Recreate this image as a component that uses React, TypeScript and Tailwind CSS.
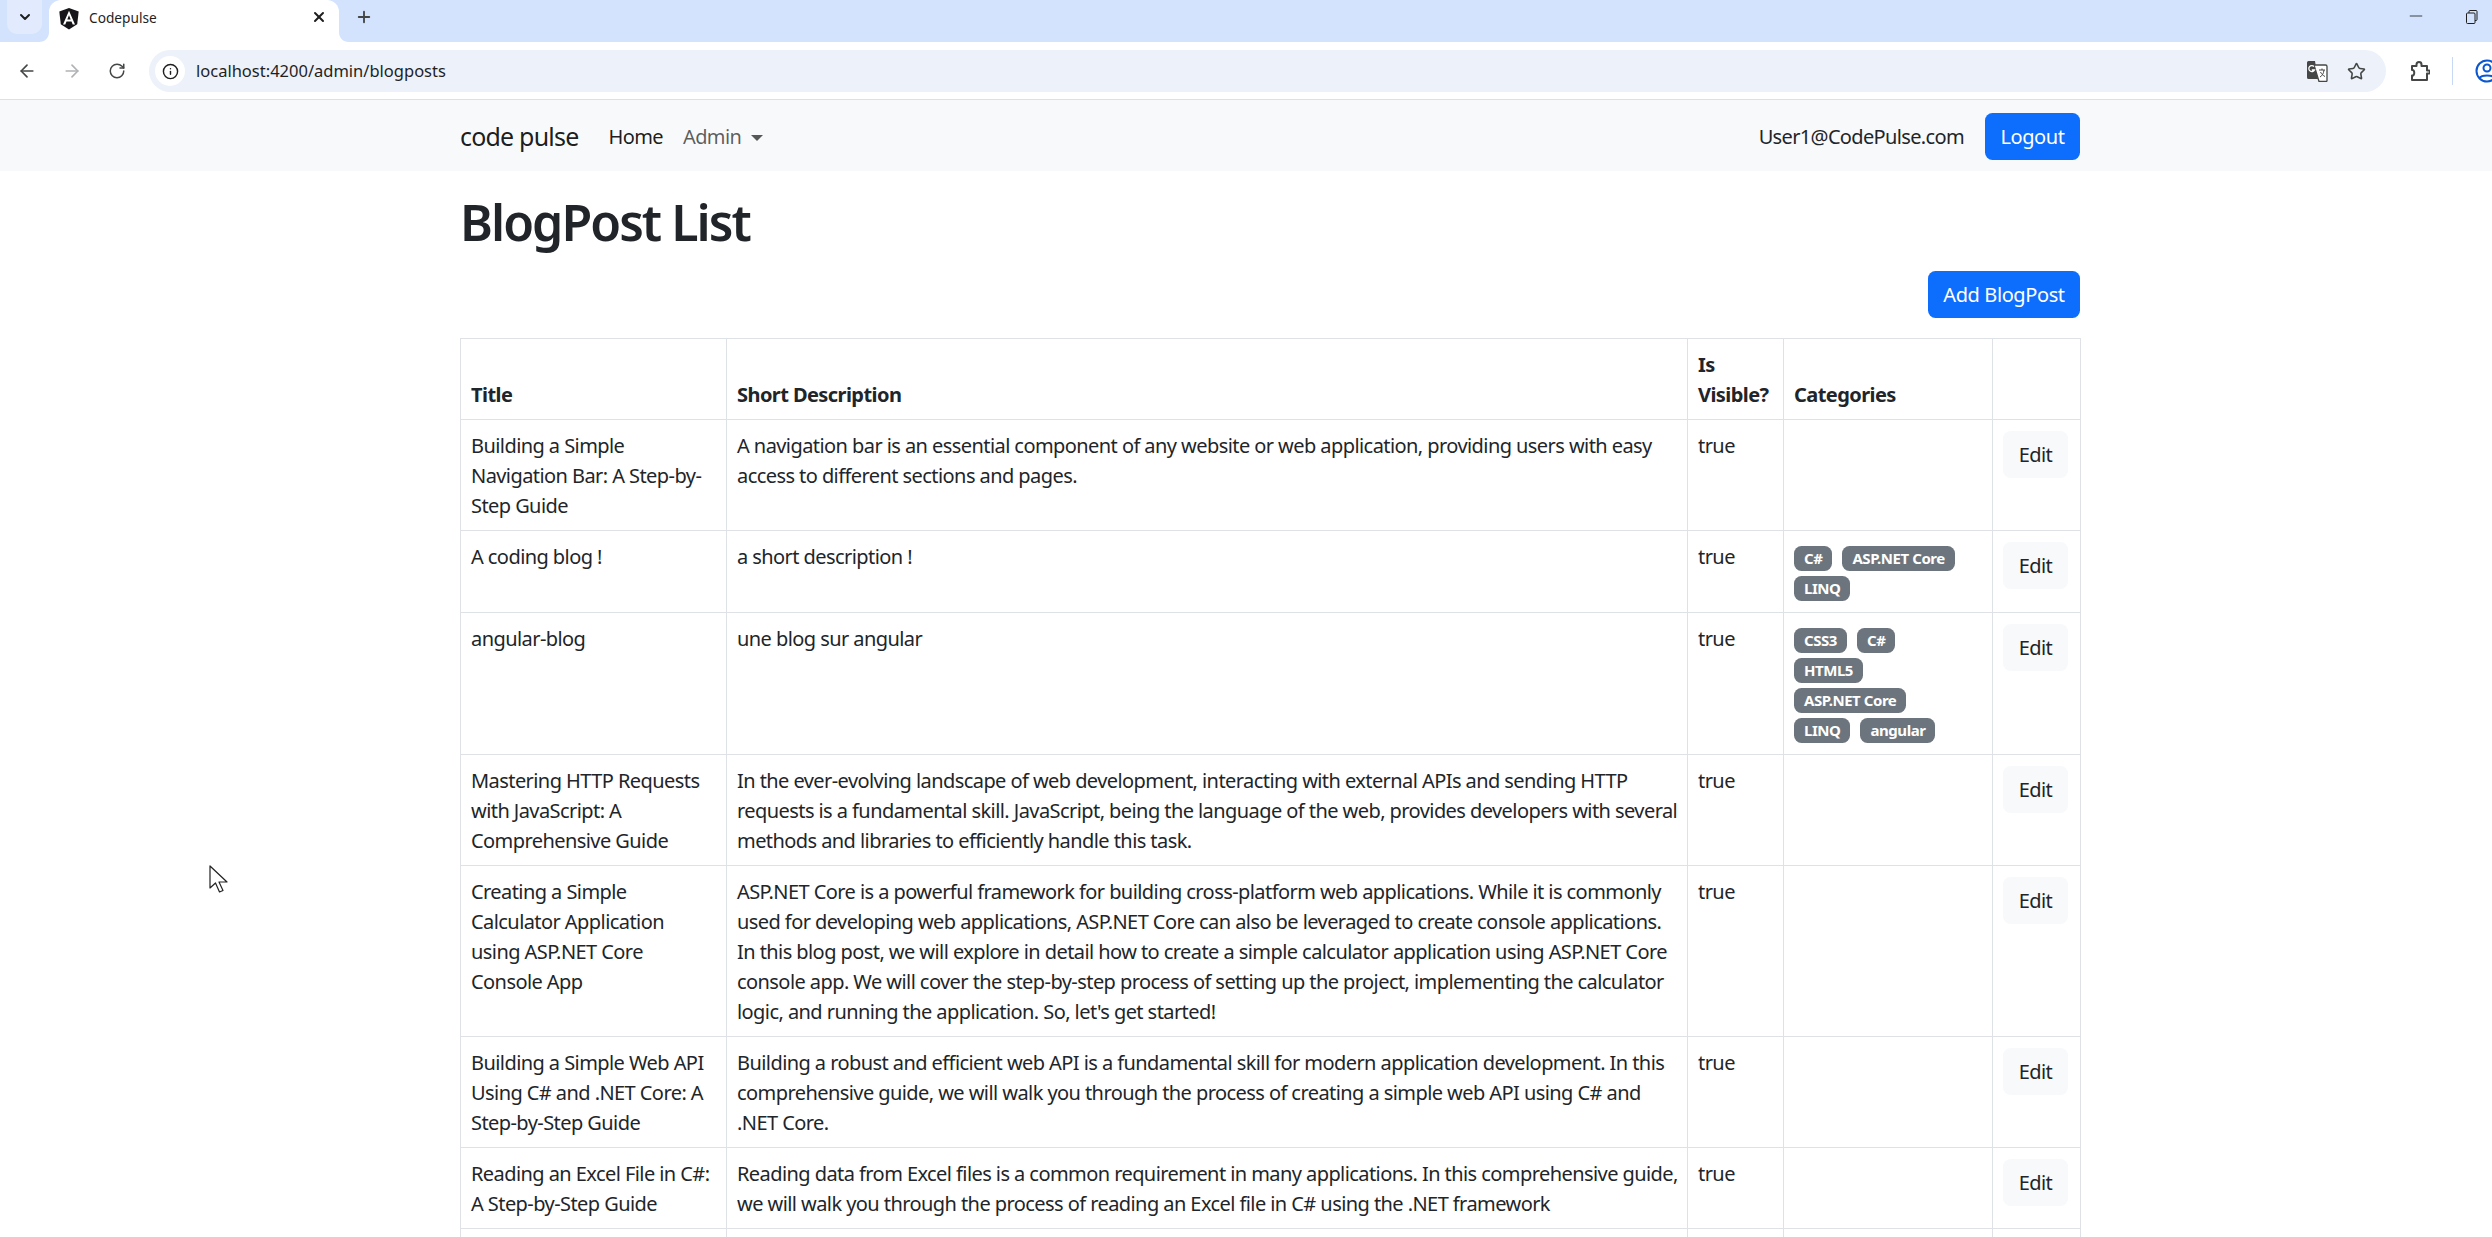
import { ArrowLeft, ArrowRight, RotateCw, Info, Star, ChevronDown, X, Plus, Minus } from 'lucide-react'

type Post = {
  title: string
  desc: string
  cats?: string[][]
}

const posts: Post[] = [
  {
    title: 'Building a Simple\nNavigation Bar: A Step-by-\nStep Guide',
    desc: 'A navigation bar is an essential component of any website or web application, providing users with easy\naccess to different sections and pages.',
  },
  {
    title: 'A coding blog !',
    desc: 'a short description !',
    cats: [['C#', 'ASP.NET Core'], ['LINQ']],
  },
  {
    title: 'angular-blog',
    desc: 'une blog sur angular',
    cats: [['CSS3', 'C#'], ['HTML5'], ['ASP.NET Core'], ['LINQ', 'angular']],
  },
  {
    title: 'Mastering HTTP Requests\nwith JavaScript: A\nComprehensive Guide',
    desc: 'In the ever-evolving landscape of web development, interacting with external APIs and sending HTTP\nrequests is a fundamental skill. JavaScript, being the language of the web, provides developers with several\nmethods and libraries to efficiently handle this task.',
  },
  {
    title: 'Creating a Simple\nCalculator Application\nusing ASP.NET Core\nConsole App',
    desc: "ASP.NET Core is a powerful framework for building cross-platform web applications. While it is commonly\nused for developing web applications, ASP.NET Core can also be leveraged to create console applications.\nIn this blog post, we will explore in detail how to create a simple calculator application using ASP.NET Core\nconsole app. We will cover the step-by-step process of setting up the project, implementing the calculator\nlogic, and running the application. So, let's get started!",
  },
  {
    title: 'Building a Simple Web API\nUsing C# and .NET Core: A\nStep-by-Step Guide',
    desc: 'Building a robust and efficient web API is a fundamental skill for modern application development. In this\ncomprehensive guide, we will walk you through the process of creating a simple web API using C# and\n.NET Core.',
  },
  {
    title: 'Reading an Excel File in C#:\nA Step-by-Step Guide',
    desc: 'Reading data from Excel files is a common requirement in many applications. In this comprehensive guide,\nwe will walk you through the process of reading an Excel file in C# using the .NET framework',
  },
]

function BrowserChrome() {
  return (
    <div className="font-['Noto_Sans',sans-serif]">
      {/* tab strip */}
      <div className="flex h-[42px] bg-[#d3e3fd]">
        <div className="ml-[7px] flex h-[34px] w-[35px] items-center justify-center rounded-b-[10px] bg-[#e1ebfd]">
          <ChevronDown size={16} strokeWidth={3} className="text-[#1f1f1f]" />
        </div>
        <div className="relative ml-[7px] flex h-[42px] w-[290px] items-center rounded-t-[12px] bg-white pb-[5px] pl-[10px]">
          <svg className="absolute bottom-0 left-[-10px]" width="10" height="10" viewBox="0 0 10 10">
            <path d="M10 0v10H0c6 0 10-4 10-10z" fill="#ffffff" />
          </svg>
          <svg className="absolute bottom-0 right-[-10px]" width="10" height="10" viewBox="0 0 10 10">
            <path d="M0 0v10h10C4 10 0 6 0 0z" fill="#ffffff" />
          </svg>
          <svg width="20" height="22" viewBox="0 0 20 22">
            <path d="M10 0 0.3 3.500l1.500 12.800L10 21.500l8.200-5.200 1.500-12.800z" fill="#16161a" />
            <path d="M10 2.800 4 16.400h2.300l1.200-3h5l1.200 3H16L10 2.800zm1.700 8.700H8.300L10 7.300l1.700 4.200z" fill="#ffffff" />
          </svg>
          <span className="ml-[10px] text-[13.7px] text-[#1f1f1f]">Codepulse</span>
          <X size={16} strokeWidth={3} className="absolute left-[262px] top-[9px] text-[#1f1f1f]" />
        </div>
        <Plus size={18} strokeWidth={2.5} className="ml-[16px] mt-[8px] text-[#444746]" />
        <div className="flex-1" />
        <Minus size={20} strokeWidth={1} className="mr-[40px] mt-[6px] text-[#1f1f1f]" />
        <svg className="mr-[14px] mt-[10px]" width="12" height="14" viewBox="0 0 12 14" fill="none" stroke="#1f1f1f" strokeWidth="1">
          <rect x="0.5" y="3" width="8.5" height="10.5" rx="1" />
          <path d="M3 3V1.500a1 1 0 0 1 1-1h6a1 1 0 0 1 1 1v8a1 1 0 0 1-1 1H9" />
        </svg>
      </div>

      {/* toolbar */}
      <div className="flex h-[58px] items-center border-b border-[#e0e0e0] bg-white pl-[4px] pt-[1px]">
        <div className="flex w-[45px] shrink-0 justify-center">
          <ArrowLeft size={20} strokeWidth={2} className="text-[#444746]" />
        </div>
        <div className="flex w-[45px] shrink-0 justify-center">
          <ArrowRight size={20} strokeWidth={2} className="text-[#b0b2b4]" />
        </div>
        <div className="flex w-[45px] shrink-0 justify-center">
          <RotateCw size={18} strokeWidth={2} className="text-[#444746]" />
        </div>
        <div className="ml-[10px] flex h-[42px] w-[2237px] shrink-0 items-center rounded-full bg-[#ecf1fa] pl-[6px] pr-[20px]">
          <div className="flex h-[30px] w-[30px] items-center justify-center rounded-full bg-white">
            <Info size={17} strokeWidth={2} className="text-[#1f1f1f]" />
          </div>
          <span className="ml-[11px] text-[16.5px] text-[#1f1f1f]">localhost:4200/admin/blogposts</span>
          <div className="flex-1" />
          <svg width="22" height="22" viewBox="0 0 22 22">
            <path d="M1 2.500A1.500 1.500 0 0 1 2.500 1H9l3 18H2.500A1.500 1.500 0 0 1 1 17.500z" fill="#444746" />
            <path d="M8 5h11.500A1.500 1.500 0 0 1 21 6.500v14a1 1 0 0 1-1 1h-7z" fill="#ffffff" stroke="#444746" strokeWidth="1.300" />
            <path d="M13 10h6M16 8.500V10M14 17c2.500-1.500 3.500-3.500 4-7M14.500 12c1 2 2.500 3.500 4.500 4.500" fill="none" stroke="#444746" strokeWidth="1" />
            <path d="M8 6.500a3 3 0 1 0 .5 3.500H5.800" fill="none" stroke="#ffffff" strokeWidth="1.300" />
          </svg>
          <Star size={19} strokeWidth={2} className="ml-[19px] text-[#444746]" />
        </div>
        <svg className="ml-[24px] shrink-0" width="20" height="22" viewBox="0 0 20 22" fill="none" stroke="#444746" strokeWidth="2">
          <path d="M2 6h4.500V4.500a2.500 2.500 0 0 1 5 0V6H17v4.500h1.500a1.500 1.500 0 0 1 0 3H17V20H2v-4.500c3 .8 3-6.500 0-5.500z" strokeLinejoin="round" />
        </svg>
        <div className="ml-[22px] h-[28px] w-[1px] shrink-0 bg-[#c7d9f5]" />
        <svg className="ml-[22px] shrink-0" width="24" height="24" viewBox="0 0 24 24" fill="none" stroke="#0b57d0" strokeWidth="2">
          <circle cx="12" cy="12" r="10.500" />
          <circle cx="12" cy="9" r="3.500" />
          <path d="M4.500 19c2-3.500 13-3.500 15 0" />
        </svg>
      </div>
    </div>
  )
}

function NavBar() {
  return (
    <div className="flex h-[71px] items-center bg-[#f8f9fa] pl-[460px] pt-[1px]">
      <div className="flex w-[1620px] items-center">
        <span className="mt-[1px] text-[25px] tracking-[-0.8px] text-black/90">code pulse</span>
        <span className="ml-[30px] mt-[1px] text-[20px] tracking-[-0.6px] text-black/90">Home</span>
        <span className="ml-[20px] mt-[1px] text-[20px] tracking-[-0.6px] text-black/65">Admin</span>
        <span className="ml-[10px] mt-[3px] h-0 w-0 border-x-[6px] border-t-[6px] border-x-transparent border-t-black/65" />
        <div className="flex-1" />
        <span className="mt-[1px] text-[20px] tracking-[-0.65px] text-[#212529]">User1@CodePulse.com</span>
        <button className="ml-[21px] h-[47px] w-[95px] rounded-[7.5px] bg-[#0d6efd] pt-[1px] text-[20px] tracking-[-0.4px] text-white">
          Logout
        </button>
      </div>
    </div>
  )
}

function PostRow({ post }: { post: Post }) {
  return (
    <tr>
      <td className="border border-[#dee2e6] px-[10px] pt-[11px] pb-[9px] align-top whitespace-pre">{post.title}</td>
      <td className="border border-[#dee2e6] px-[10px] pt-[11px] pb-[9px] align-top whitespace-pre">{post.desc}</td>
      <td className="border border-[#dee2e6] px-[10px] pt-[11px] pb-[9px] align-top">true</td>
      <td className={post.cats ? 'border border-[#dee2e6] px-[10px] pt-[12px] pb-[9px] align-top' : 'border border-[#dee2e6] p-[10px] align-top'}>
        {post.cats?.map((line, i) => (
          <div key={i} className="flex h-[30px] items-center gap-[10px]">
            {line.map((c) => (
              <span
                key={c}
                className="rounded-[7.5px] bg-[#6c757d] px-[10px] pt-[4px] pb-[5px] text-[15px] leading-[16px] font-bold tracking-[-0.45px] text-white"
              >
                {c}
              </span>
            ))}
          </div>
        ))}
      </td>
      <td className="border border-[#dee2e6] px-[10px] pt-[11px] pb-[9px] align-top">
        <button className="h-[47px] w-[65px] rounded-[7.5px] bg-[#f8f9fa] text-[#212529]">Edit</button>
      </td>
    </tr>
  )
}

export default function App() {
  return (
    <div className="relative h-[1237px] w-[2492px] overflow-hidden bg-white font-['Noto_Sans',sans-serif] text-[#212529]">
      <BrowserChrome />
      <NavBar />

      <div className="ml-[460px] w-[1620px]">
        <h1 className="mt-[21px] text-[50px] leading-[60px] font-semibold tracking-[-1.95px]">BlogPost List</h1>

        <div className="mt-[19px] flex justify-end">
          <button className="h-[47px] w-[152px] rounded-[7.5px] bg-[#0d6efd] pt-[1px] text-[20px] tracking-[-0.4px] text-white">
            Add BlogPost
          </button>
        </div>

        <table className="mt-[20px] w-[1620px] table-fixed border-collapse text-[20px] leading-[30px] tracking-[-0.57px]">
          <colgroup>
            <col className="w-[266px]" />
            <col className="w-[961px]" />
            <col className="w-[96px]" />
            <col className="w-[209px]" />
            <col className="w-[88px]" />
          </colgroup>
          <thead>
            <tr>
              <th className="border border-[#dee2e6] px-[10px] pt-[11px] pb-[9px] text-left align-bottom">Title</th>
              <th className="border border-[#dee2e6] px-[10px] pt-[11px] pb-[9px] text-left align-bottom">Short Description</th>
              <th className="border border-[#dee2e6] px-[10px] pt-[11px] pb-[9px] text-left align-bottom">Is Visible?</th>
              <th className="border border-[#dee2e6] px-[10px] pt-[11px] pb-[9px] text-left align-bottom">Categories</th>
              <th className="border border-[#dee2e6] px-[10px] pt-[11px] pb-[9px] text-left align-bottom"></th>
            </tr>
          </thead>
          <tbody>
            {posts.map((p) => (
              <PostRow key={p.title} post={p} />
            ))}
            <tr>
              <td className="h-[60px] border border-[#dee2e6]"></td>
              <td className="border border-[#dee2e6]"></td>
              <td className="border border-[#dee2e6]"></td>
              <td className="border border-[#dee2e6]"></td>
              <td className="border border-[#dee2e6]"></td>
            </tr>
          </tbody>
        </table>
      </div>

      {/* mouse pointer */}
      <svg className="absolute left-[209px] top-[865px]" width="20" height="30" viewBox="0 0 20 30">
        <path d="M1 1v22l5.500-5 4 9 3.500-1.500-4-8.500H18z" fill="#ffffff" stroke="#222222" strokeWidth="1.200" strokeLinejoin="round" />
      </svg>
    </div>
  )
}
